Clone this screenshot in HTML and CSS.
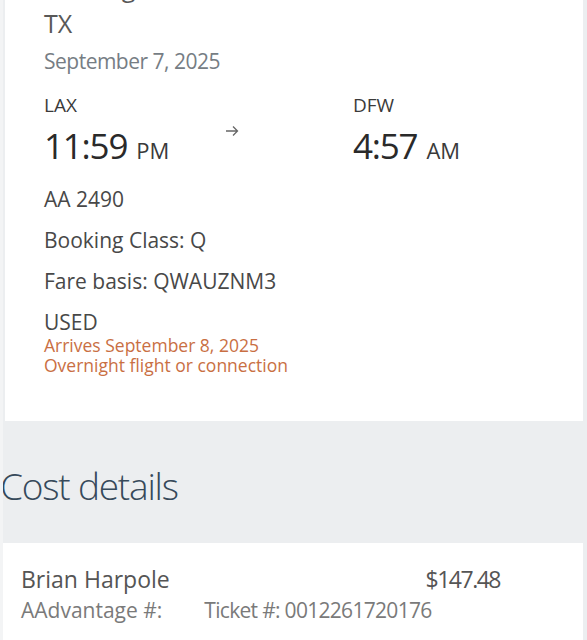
FILE: index.html
```html
<!DOCTYPE html>
<html lang="en">
<head>
  <meta charset="UTF-8">
  <title>Trip details</title>
  <link rel="stylesheet" href="styles.css">
</head>
<body>
  <div class="page">
    <section class="card flight">
      <h2 class="route">Los Angeles, CA to Dallas/Fort Worth,<br>TX</h2>
      <div class="date">September 7, 2025</div>

      <div class="legs">
        <div class="leg">
          <div class="airport">LAX</div>
          <div class="time">11:59<span class="ampm">PM</span></div>
        </div>
        <div class="arrow">
          <svg width="14" height="12" viewBox="0 0 14 12">
            <path d="M1 6H12.5M8 1.5L12.5 6L8 10.5" fill="none" stroke="#666" stroke-width="1.3"/>
          </svg>
        </div>
        <div class="leg">
          <div class="airport">DFW</div>
          <div class="time">4:57<span class="ampm">AM</span></div>
        </div>
      </div>

      <div class="info">AA 2490</div>
      <div class="info">Booking Class: Q</div>
      <div class="info">Fare basis: QWAUZNM3</div>
      <div class="info status">USED</div>
      <div class="notice">Arrives September 8, 2025<br>Overnight flight or connection</div>
    </section>

    <h1 class="section-title">Cost details</h1>

    <section class="card cost">
      <div class="cost-row">
        <span class="name">Brian Harpole</span>
        <span class="price">$147.48</span>
      </div>
      <div class="cost-meta">
        <span class="aadvantage">AAdvantage #:</span>
        <span class="ticket">Ticket #: 0012261720176</span>
      </div>
    </section>
  </div>
</body>
</html>
```

FILE: styles.css
```css
body {
  margin: 0;
  font-family: 'Open Sans', 'Liberation Sans', sans-serif;
  background: #eceef0;
  color: #333;
  overflow: hidden;
}

.page {
  width: 587px;
  height: 640px;
  overflow: hidden;
  border-left: 3px solid #f3f4f5;
  box-sizing: border-box;
}

.card {
  background: #fff;
}

.flight {
  margin: 0 4px 0 2px;
  padding: 0 0 46px 39px;
}

.route {
  margin: -31px 0 0;
  font-size: 25px;
  font-weight: normal;
  line-height: 36px;
  color: #585858;
}

.date {
  margin-top: 6px;
  font-size: 21px;
  letter-spacing: -0.5px;
  color: #767d84;
}

.legs {
  display: grid;
  grid-template-columns: 181px 128px auto;
  margin-top: 17px;
}

.airport {
  font-size: 19px;
  color: #3a3a3a;
}

.time {
  margin-top: 6px;
  font-size: 35px;
  line-height: 44px;
  letter-spacing: -1.2px;
  color: #2a2a2a;
}

.ampm {
  margin-left: 9px;
  font-size: 22px;
  letter-spacing: 0;
  color: #3a3a3a;
}

.arrow {
  padding-top: 28px;
}

.info {
  margin-top: 19px;
  font-size: 21px;
  line-height: 22px;
  color: #484848;
}

.legs + .info {
  margin-top: 16px;
}

.status {
  margin-bottom: 3px;
}

.notice {
  font-size: 17.5px;
  line-height: 19.5px;
  color: #c96f43;
}

.section-title {
  margin: 42px 0 34px -3px;
  font-size: 37px;
  font-weight: 300;
  line-height: 46px;
  letter-spacing: -1.2px;
  color: #36495a;
}

.cost {
  margin: 0 4px 0 0;
  padding: 20px 83px 20px 18px;
}

.cost-row {
  display: flex;
  justify-content: space-between;
  font-size: 23px;
  color: #555;
}

.price {
  letter-spacing: -1.5px;
}

.cost-meta {
  display: flex;
  gap: 42px;
  margin-top: 1px;
  font-size: 21px;
  color: #7a7a7a;
}

.ticket {
  letter-spacing: -0.7px;
}
```
